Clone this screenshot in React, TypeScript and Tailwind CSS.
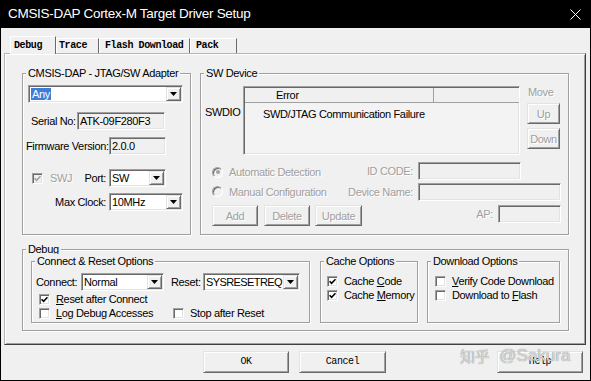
import type { ReactNode } from 'react';

const ui = "font-['Liberation_Sans',Arial,sans-serif] text-[11px] leading-[14px] tracking-[-0.35px] text-black";
const mono = "font-['Liberation_Mono','Courier_New',monospace] text-[10px] leading-[14px] tracking-[-0.4px] text-black";
const raised =
  'border border-t-[#e3e3e3] border-l-[#e3e3e3] border-r-[#696969] border-b-[#696969] bg-[#f0f0f0] shadow-[inset_1px_1px_0_#fff,inset_-1px_-1px_0_#a0a0a0]';
const sunken =
  'border border-t-[#a0a0a0] border-l-[#a0a0a0] border-r-white border-b-white shadow-[inset_1px_1px_0_#696969,inset_-1px_-1px_0_#e3e3e3]';
const etched = 'border border-[#a0a0a0] shadow-[inset_1px_1px_0_#fff,1px_1px_0_#fff]';
const dim = 'text-[#a0a0a0] [text-shadow:1px_1px_0_#fff]';

function Group({ label, className, children }: { label: string; className: string; children?: ReactNode }) {
  return (
    <div className={`relative shrink-0 ${etched} ${className}`}>
      <span className="absolute -top-[8px] left-[3px] whitespace-nowrap bg-[#f0f0f0] px-[2px]">{label}</span>
      {children}
    </div>
  );
}

function Arrow() {
  return (
    <svg width="7" height="4" viewBox="0 0 7 4">
      <path d="M0 0h7L3.5 4z" fill="#000" />
    </svg>
  );
}

function Select({
  value,
  className,
  highlight,
  textClass,
}: {
  value: string;
  className: string;
  highlight?: boolean;
  textClass?: string;
}) {
  return (
    <div className={`flex h-[18px] shrink-0 items-center bg-white ${sunken} ${className}`}>
      <span className={`min-w-0 flex-1 overflow-hidden whitespace-nowrap pl-[2px] ${textClass ?? ''}`}>
        {highlight ? <span className="bg-[#3b7dd8] px-[1px] text-white">{value}</span> : value}
      </span>
      <span className={`mr-[1px] flex h-[14px] w-[15px] shrink-0 items-center justify-center ${raised}`}>
        <Arrow />
      </span>
    </div>
  );
}

function Field({ value, className }: { value?: string; className: string }) {
  return <div className={`flex h-[18px] shrink-0 items-center pl-[2px] ${sunken} ${className}`}>{value}</div>;
}

function Check({ on, disabled }: { on?: boolean; disabled?: boolean }) {
  return (
    <span
      className={`flex h-[11px] w-[11px] shrink-0 items-center justify-center ${disabled ? 'bg-[#f0f0f0]' : 'bg-white'} ${sunken}`}
    >
      {on && (
        <svg width="7" height="7" viewBox="0 0 7 7">
          <path d="M0.6 3.2 2.6 5.3 6.5 1.2" fill="none" stroke={disabled ? '#a0a0a0' : '#000'} strokeWidth="1.6" />
        </svg>
      )}
    </span>
  );
}

function Radio({ on }: { on?: boolean }) {
  return (
    <span className="flex h-[11px] w-[11px] shrink-0 items-center justify-center rounded-full border border-t-[#a0a0a0] border-l-[#a0a0a0] border-r-white border-b-white bg-[#f0f0f0] shadow-[inset_1px_1px_0_#696969]">
      {on && <span className="h-[4px] w-[4px] rounded-full bg-[#a0a0a0]" />}
    </span>
  );
}

function Btn({ children, className, disabled }: { children: ReactNode; className: string; disabled?: boolean }) {
  return (
    <div className={`flex shrink-0 items-center justify-center ${raised} ${disabled ? dim : ''} ${className}`}>
      {children}
    </div>
  );
}

function CheckRow({ on, className, children }: { on?: boolean; className?: string; children: ReactNode }) {
  return (
    <div className={`flex h-[14px] items-center whitespace-nowrap ${className ?? ''}`}>
      <Check on={on} />
      <span className="ml-[6px]">{children}</span>
    </div>
  );
}

export default function App() {
  return (
    <div
      className={`relative flex h-[381px] w-[591px] flex-col overflow-hidden border-x border-b border-black bg-[#f0f0f0] ${ui}`}
    >
      {/* title bar */}
      <div className="flex h-[28px] shrink-0 items-center justify-between bg-black pl-[7px] pr-[9px]">
        <span className="text-[13.5px] leading-[16px] tracking-[-0.3px] text-white">
          CMSIS-DAP Cortex-M Target Driver Setup
        </span>
        <svg width="11" height="11" viewBox="0 0 11 11" stroke="#fff" strokeWidth="1">
          <path d="M0.5 0.5l10 10M10.5 0.5l-10 10" />
        </svg>
      </div>

      {/* tabs */}
      <div className={`ml-[9px] mt-[8px] flex h-[17px] shrink-0 items-end font-bold ${mono}`}>
        <div className="relative z-10 -mb-[1px] flex h-[18px] w-[46px] items-center border-x border-t border-l-white border-t-white border-r-[#696969] bg-[#f0f0f0] pl-[3px]">
          Debug
        </div>
        <div className="flex h-[15px] w-[43px] items-center border-x border-t border-l-white border-t-white border-r-[#696969] pl-[2px]">
          Trace
        </div>
        <div className="flex h-[15px] w-[91px] items-center border-x border-t border-l-white border-t-white border-r-[#696969] pl-[5px]">
          Flash Download
        </div>
        <div className="flex h-[15px] w-[47px] items-center border-x border-t border-l-white border-t-white border-r-[#696969] pl-[5px]">
          Pack
        </div>
      </div>

      {/* tab panel */}
      <div className="ml-[3px] flex h-[292px] w-[582px] shrink-0 flex-col border border-t-[#b4b4b4] border-l-[#b4b4b4] border-r-[#404040] border-b-[#404040] pl-[17px] pt-[19px] shadow-[inset_1px_1px_0_#fff,inset_-1px_-1px_0_#a0a0a0]">
        <div className="flex">
          <Group label="CMSIS-DAP - JTAG/SW Adapter" className="flex h-[162px] w-[169px] flex-col">
            <Select value="Any" highlight className="ml-[5px] mt-[11px] w-[155px]" />
            <div className="mt-[9px] flex items-center">
              <span className="w-[54px] shrink-0 whitespace-nowrap pl-[8px]">Serial No:</span>
              <Field value="ATK-09F280F3" className="w-[88px]" />
            </div>
            <div className="mt-[7px] flex items-center">
              <span className="w-[86px] shrink-0 whitespace-nowrap pl-[3px]">Firmware Version:</span>
              <Field value="2.0.0" className="w-[57px]" />
            </div>
            <div className="mt-[14px] flex items-center">
              <div className="flex w-[86px] shrink-0 items-center pl-[9px]">
                <Check on disabled />
                <span className={`ml-[7px] ${dim}`}>SWJ</span>
                <span className="ml-auto pr-[3px]">Port:</span>
              </div>
              <Select value="SW" className="w-[57px]" />
            </div>
            <div className="mt-[6px] flex items-center">
              <span className="flex w-[86px] shrink-0 justify-end whitespace-nowrap pr-[3px]">Max Clock:</span>
              <Select value="10MHz" className="w-[74px]" />
            </div>
          </Group>

          <Group label="SW Device" className="ml-[9px] flex h-[162px] w-[369px] flex-col">
            <div className="mt-[12px] flex items-start">
              <span className="mt-[19px] w-[42px] shrink-0 pl-[4px]">SWDIO</span>
              <div className={`flex h-[69px] w-[277px] shrink-0 flex-col bg-[#f3f3f3] ${sunken}`}>
                <div className="ml-[1px] mt-[1px] flex h-[15px] shrink-0 border-b border-[#a0a0a0] bg-[#f0f0f0]">
                  <span className="w-[189px] border-r border-[#a0a0a0] pl-[31px]">Error</span>
                </div>
                <span className="mt-[4px] whitespace-nowrap pl-[19px]">SWD/JTAG Communication Failure</span>
              </div>
              <div className="ml-[7px] flex w-[33px] flex-col">
                <span className={`h-[17px] pl-[1px] leading-[12px] ${dim}`}>Move</span>
                <Btn disabled className="h-[21px] w-[33px]">
                  Up
                </Btn>
                <Btn disabled className="mt-[4px] h-[21px] w-[33px]">
                  Down
                </Btn>
              </div>
            </div>

            <div className="mt-[7px] flex h-[17px] items-center">
              <div className="flex h-full w-[150px] shrink-0 items-center whitespace-nowrap pl-[11px] pt-[3px]">
                <Radio on />
                <span className={`ml-[6px] ${dim}`}>Automatic Detection</span>
              </div>
              <span className={`flex w-[67px] shrink-0 justify-end whitespace-nowrap pr-[5px] ${dim}`}>ID CODE:</span>
              <Field className="h-[17px] w-[103px]" />
            </div>
            <div className="mt-[4px] flex h-[17px] items-center">
              <div className="flex w-[150px] shrink-0 items-center whitespace-nowrap pl-[11px]">
                <Radio />
                <span className={`ml-[6px] ${dim}`}>Manual Configuration</span>
              </div>
              <span className={`flex w-[67px] shrink-0 justify-end whitespace-nowrap pr-[5px] ${dim}`}>
                Device Name:
              </span>
              <Field className="h-[17px] w-[143px]" />
            </div>
            <div className="mt-[5px] flex items-start pr-[7px]">
              <div className="flex pl-[11px]">
                <Btn disabled className="h-[21px] w-[46px]">
                  Add
                </Btn>
                <Btn disabled className="ml-[6px] h-[21px] w-[46px]">
                  Delete
                </Btn>
                <Btn disabled className="ml-[5px] h-[21px] w-[47px]">
                  Update
                </Btn>
              </div>
              <div className="ml-auto flex h-[17px] items-center">
                <span className={`pr-[5px] ${dim}`}>AP:</span>
                <Field className="h-[17px] w-[63px]" />
              </div>
            </div>
          </Group>
        </div>

        <Group label="Debug" className="mt-[14px] flex h-[82px] w-[547px] items-start">
          <Group label="Connect & Reset Options" className="ml-[8px] mt-[11px] flex h-[62px] w-[279px] flex-col">
            <div className="mt-[11px] flex items-center whitespace-nowrap">
              <span className="w-[49px] shrink-0 pl-[4px]">Connect:</span>
              <Select value="Normal" className="w-[83px]" />
              <span className="ml-[7px] w-[32px] shrink-0">Reset:</span>
              <Select value="SYSRESETREQ" className="w-[97px]" textClass="tracking-[-0.6px]" />
            </div>
            <CheckRow on className="mt-[1px] pl-[7px]">
              <u>R</u>eset after Connect
            </CheckRow>
            <div className="flex pl-[7px]">
              <CheckRow className="w-[134px]">
                <u>L</u>og Debug Accesses
              </CheckRow>
              <CheckRow>Stop after Reset</CheckRow>
            </div>
          </Group>

          <Group label="Cache Options" className="ml-[10px] mt-[11px] flex h-[62px] w-[98px] flex-col pl-[6px] pt-[12px]">
            <CheckRow on>
              Cache <u>C</u>ode
            </CheckRow>
            <CheckRow on>
              Cache <u>M</u>emory
            </CheckRow>
          </Group>

          <Group label="Download Options" className="ml-[9px] mt-[11px] flex h-[62px] w-[133px] flex-col pl-[7px] pt-[12px]">
            <CheckRow>
              <u>V</u>erify Code Download
            </CheckRow>
            <CheckRow>
              Download to <u>F</u>lash
            </CheckRow>
          </Group>
        </Group>
      </div>

      {/* dialog buttons */}
      <div className={`mt-[6px] flex ${mono}`}>
        <Btn className="ml-[202px] h-[22px] w-[86px]">OK</Btn>
        <Btn className="ml-[10px] h-[22px] w-[87px]">Cancel</Btn>
        <Btn className="ml-[111px] h-[22px] w-[86px]">Help</Btn>
      </div>

      {/* watermark over the Help button */}
      <div className="pointer-events-none absolute left-[459px] top-[345px] flex items-center whitespace-nowrap text-[#d6d6d6] [text-shadow:0_0_1px_#7a7a7a]">
        <span className="font-['Noto_Sans_CJK_SC',sans-serif] text-[15px] leading-[22px]">知乎</span>
        <span className="ml-[10px] font-['Liberation_Sans',Arial,sans-serif] text-[17px] leading-[22px] tracking-normal">
          @Sakura
        </span>
      </div>
    </div>
  );
}
